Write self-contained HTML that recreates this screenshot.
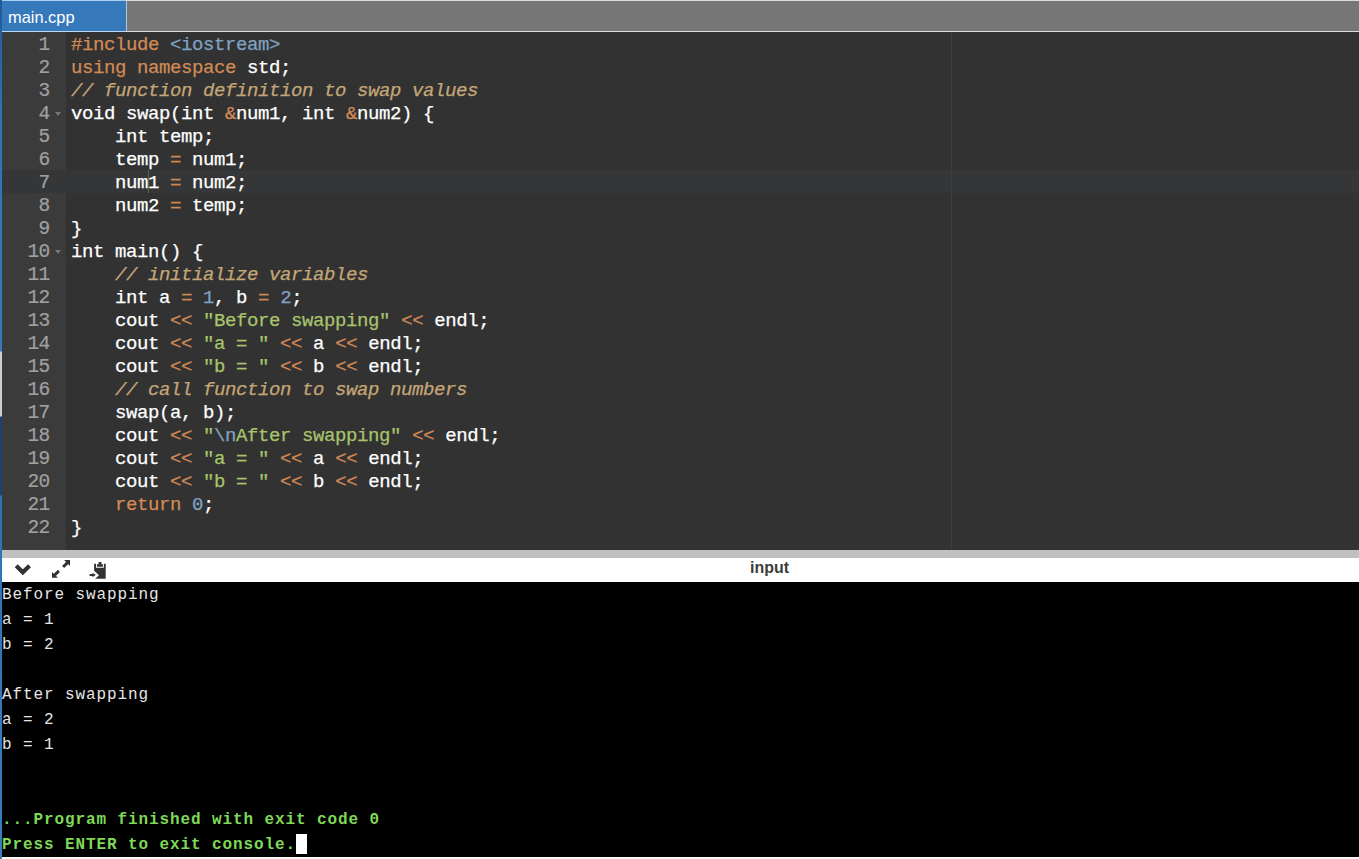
<!DOCTYPE html>
<html><head><meta charset="utf-8">
<style>
html,body{margin:0;padding:0;width:1359px;height:859px;overflow:hidden;background:#000;}
body{position:relative;font-family:"Liberation Sans",sans-serif;}
#lstrip{position:absolute;left:0;top:0;width:2px;height:859px;background:linear-gradient(#1d5a96 0px,#2f74b6 120px,#3479ba 351px,#cfcfcf 352px,#cfcfcf 416px,#1d4172 417px,#1d4172 495px,#2e72b5 496px,#3a7cbc 859px);}
#topline{position:absolute;left:2px;top:0;width:1357px;height:1px;background:linear-gradient(90deg,#a9cdf0 0,#a9cdf0 124px,#dadada 124px);}
#tabbar{position:absolute;left:2px;top:1px;width:1357px;height:30px;background:#767676;}
#tab{position:absolute;left:2px;top:1px;width:124px;height:30px;background:#3579bb;color:#fff;font-size:16px;border-right:1px solid #b9c6d6;}
#tab span{position:absolute;left:6px;top:6.5px;line-height:18px;font-size:16.4px;}
#tabline{position:absolute;left:2px;top:31px;width:1357px;height:1px;background:linear-gradient(90deg,#bcd8f4 0,#bcd8f4 125px,#dcdcdc 125px);}
#editor{position:absolute;left:2px;top:32px;width:1357px;height:518px;background:#323232;overflow:hidden;}
#gutter{position:absolute;left:0;top:0;width:64px;height:518px;background:#3b3b3b;}
#activeline{position:absolute;left:64px;top:138px;width:1293px;height:23px;background:#353637;}
#gactive{position:absolute;left:0;top:138px;width:64px;height:23px;background:#353637;}
#margin{position:absolute;left:949px;top:0;width:1px;height:518px;background:#3e3e3e;}
.ln{position:absolute;left:0;width:47.5px;margin-top:2px;-webkit-text-stroke:0.2px currentColor;text-align:right;height:23px;line-height:23px;color:#a0a0a0;font-family:"Liberation Mono",monospace;font-size:19.5px;letter-spacing:-0.7px;}
.code{position:absolute;left:69px;top:2px;-webkit-text-stroke:0.25px currentColor;font-family:"Liberation Mono",monospace;font-size:19px;letter-spacing:-0.4px;line-height:23px;color:#fff;white-space:pre;}
.k{color:#D28A55}.c{color:#80A2C2}.s{color:#A8C46C}.cm{color:#C4A677;font-style:italic}
.fold{position:absolute;left:53px;width:0;height:0;border-left:3.5px solid transparent;border-right:3.5px solid transparent;border-top:4px solid #777;}
#graybar{position:absolute;left:2px;top:550px;width:1357px;height:8px;background:#c0c0c0;}
#toolbar{position:absolute;left:2px;top:558px;width:1357px;height:24px;background:#fff;}
#inputlbl{position:absolute;left:748px;top:2px;font-size:16px;line-height:16px;font-weight:bold;color:#3c3c3c;}
#term{position:absolute;left:2px;top:582px;width:1357px;height:275px;box-sizing:border-box;padding-top:1px;background:#000;font-family:"Liberation Mono",monospace;font-size:16px;letter-spacing:0.9px;color:#e6e6e6;white-space:pre;line-height:25px;}
#term .g{color:#7fd858;font-weight:bold;}
#cursor{display:inline-block;width:11px;height:20px;background:#fff;vertical-align:-5px;}
#bottomline{position:absolute;left:2px;top:857px;width:1357px;height:2px;background:#fafafa;}
</style></head><body>
<div id="lstrip"></div>
<div id="topline"></div>
<div id="tabbar"></div>
<div id="tab"><span>main.cpp</span></div>
<div id="tabline"></div>
<div id="editor">
  <div id="gutter"></div>
  <div id="gactive"></div>
  <div id="activeline"></div>
  <div id="margin"></div>
  <div id="acur" style="position:absolute;left:146px;top:138px;width:1px;height:23px;background:#58693a;"></div>
  <div class="ln" style="top:0">1</div>
  <div class="ln" style="top:23px">2</div>
  <div class="ln" style="top:46px">3</div>
  <div class="ln" style="top:69px">4</div>
  <div class="ln" style="top:92px">5</div>
  <div class="ln" style="top:115px">6</div>
  <div class="ln" style="top:138px">7</div>
  <div class="ln" style="top:161px">8</div>
  <div class="ln" style="top:184px">9</div>
  <div class="ln" style="top:207px">10</div>
  <div class="ln" style="top:230px">11</div>
  <div class="ln" style="top:253px">12</div>
  <div class="ln" style="top:276px">13</div>
  <div class="ln" style="top:299px">14</div>
  <div class="ln" style="top:322px">15</div>
  <div class="ln" style="top:345px">16</div>
  <div class="ln" style="top:368px">17</div>
  <div class="ln" style="top:391px">18</div>
  <div class="ln" style="top:414px">19</div>
  <div class="ln" style="top:437px">20</div>
  <div class="ln" style="top:460px">21</div>
  <div class="ln" style="top:483px">22</div>
  <div class="fold" style="top:80px"></div>
  <div class="fold" style="top:218px"></div>
<div class="code"><span class="k">#include</span> <span class="c">&lt;iostream&gt;</span>
<span class="k">using</span> <span class="k">namespace</span> std;
<span class="cm">// function definition to swap values</span>
void swap(int <span class="k">&amp;</span>num1, int <span class="k">&amp;</span>num2) {
    int temp;
    temp <span class="k">=</span> num1;
    num1 <span class="k">=</span> num2;
    num2 <span class="k">=</span> temp;
}
int main() {
    <span class="cm">// initialize variables</span>
    int a <span class="k">=</span> <span class="c">1</span>, b <span class="k">=</span> <span class="c">2</span>;
    cout <span class="k">&lt;&lt;</span> <span class="s">"Before swapping"</span> <span class="k">&lt;&lt;</span> endl;
    cout <span class="k">&lt;&lt;</span> <span class="s">"a = "</span> <span class="k">&lt;&lt;</span> a <span class="k">&lt;&lt;</span> endl;
    cout <span class="k">&lt;&lt;</span> <span class="s">"b = "</span> <span class="k">&lt;&lt;</span> b <span class="k">&lt;&lt;</span> endl;
    <span class="cm">// call function to swap numbers</span>
    swap(a, b);
    cout <span class="k">&lt;&lt;</span> <span class="s">"<span class="c">\n</span>After swapping"</span> <span class="k">&lt;&lt;</span> endl;
    cout <span class="k">&lt;&lt;</span> <span class="s">"a = "</span> <span class="k">&lt;&lt;</span> a <span class="k">&lt;&lt;</span> endl;
    cout <span class="k">&lt;&lt;</span> <span class="s">"b = "</span> <span class="k">&lt;&lt;</span> b <span class="k">&lt;&lt;</span> endl;
    <span class="k">return</span> <span class="c">0</span>;
}</div>
</div>
<div id="graybar"></div>
<div id="toolbar"><span id="inputlbl">input</span></div>
<svg id="icons" width="120" height="28" viewBox="0 0 120 28" style="position:absolute;left:0;top:556px;">
<polyline points="16.2,9.7 22.8,16.3 29.5,9.7" fill="none" stroke="#333" stroke-width="4.2" stroke-linejoin="miter"/>
<polygon points="64.1,4.1 70,4.1 70,9.9" fill="#333"/>
<line x1="67.5" y1="6.6" x2="63.1" y2="11.0" stroke="#333" stroke-width="3"/>
<polygon points="52,15.9 52,21.8 57.9,21.8" fill="#333"/>
<line x1="54.5" y1="19.3" x2="58.9" y2="14.9" stroke="#333" stroke-width="3"/>
<path d="M94.1,7.8 H96 V11.7 H103.9 V7.8 H105.7 V22.65 H95.1 L99,19.2 L94.1,14.8 Z" fill="#333"/>
<path d="M97,10.75 V8.15 H98.6 V6 H101.4 V8.15 H102.9 V10.75 Z" fill="#333"/>
<path d="M89.6,18.0 H92.5 V16.8 L95.7,19.05 L92.5,21.3 V20.1 H89.6 Z" fill="#333"/>
</svg>
<div id="term">Before swapping
a = 1
b = 2

After swapping
a = 2
b = 1


<span class="g">...Program finished with exit code 0</span>
<span class="g">Press ENTER to exit console.</span><span id="cursor"></span></div>
<div id="bottomline"></div>
</body></html>
